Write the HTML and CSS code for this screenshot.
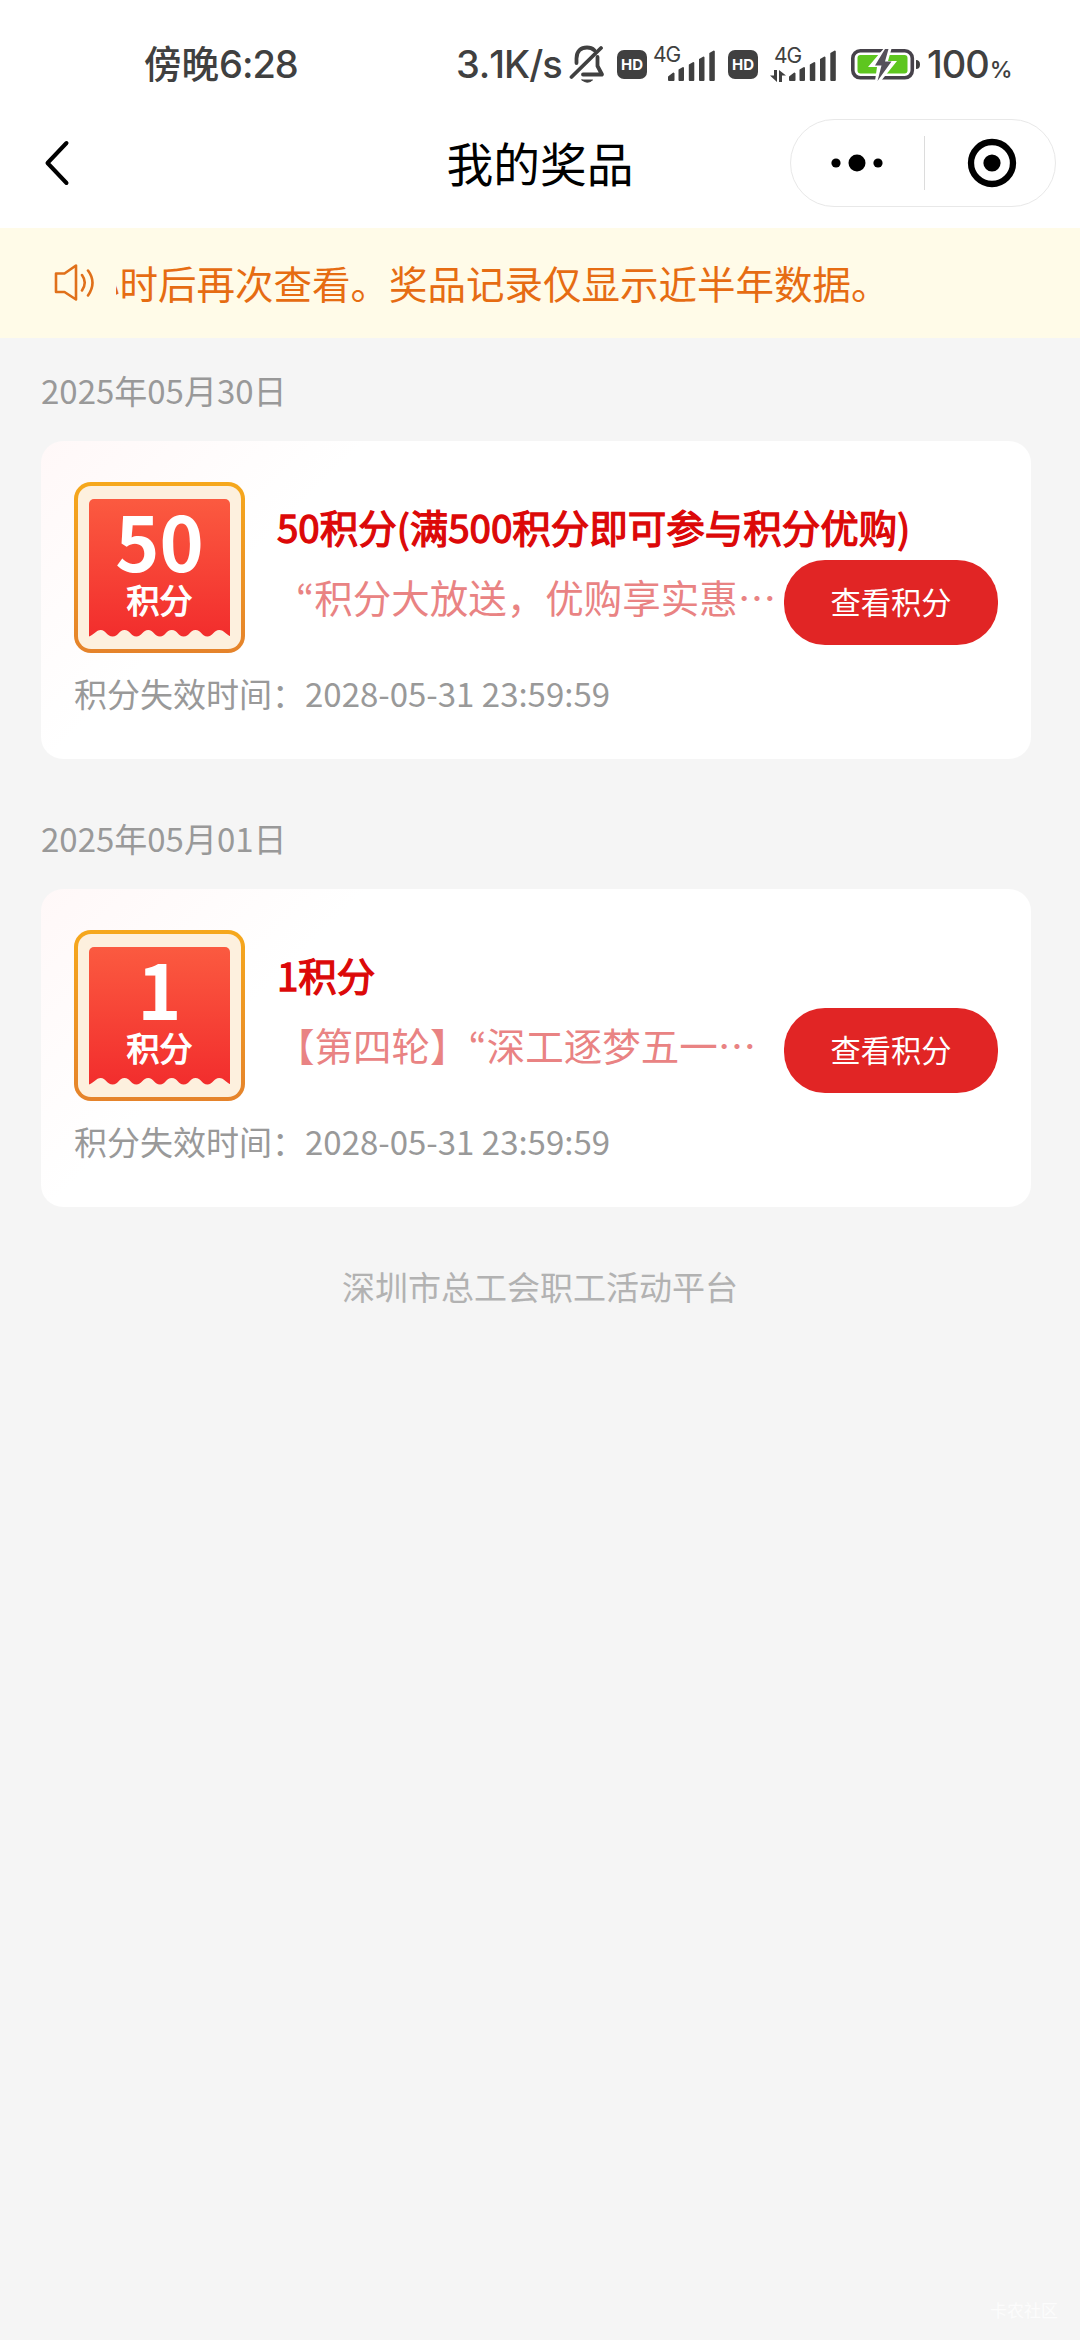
FILE: index.html
```html
<!DOCTYPE html>
<html lang="zh-CN">
<head>
<meta charset="utf-8">
<title>我的奖品</title>
<link rel="stylesheet" href="styles.css">
</head>
<body>
<div class="page">
  <header class="status">
    <span class="clock">傍晚<span class="num">6:28</span></span>
    <span class="speed num">3.1K/s</span>
    <svg class="bell" width="36" height="40" viewBox="0 0 36 40" fill="none" stroke="#404040" stroke-width="3.800" stroke-linecap="round" stroke-linejoin="round">
      <path d="M7.500 19v-4.500C7.500 7 12 3.500 18 3.500c3 0 5.500 1 7.500 2.800M28.500 13v9l4.500 8.500H14"/>
      <path d="M2.500 33 32 4"/>
      <path d="M13 36h10.500q-5 4.500-10.500 0z" fill="#404040" stroke-width="1"/>
    </svg>
    <span class="hd">HD</span>
    <span class="net net-first">4G</span>
    <svg class="bars" width="48" height="31" viewBox="0 0 48 31" fill="#404040" stroke="#404040" stroke-linejoin="round"><path d="M1 27l4.500-3.500V30H1zM11.500 20l3.500-2v12h-3.500zM21.800 15l3.500-2v17h-3.500zM32 9.500l3.500-2V30H32zM42.300 3.500l3.500-2V30h-3.500z" stroke-width="2"/></svg>
    <span class="hd">HD</span>
    <span class="net-stack">
      <span class="net">4G</span>
      <svg width="16" height="12" viewBox="0 0 16 12" fill="#404040"><path d="M4 0h3v12L0 5.500h4zM9 12h3V5.500h4L9 0z"/></svg>
    </span>
    <svg class="bars bars-second" width="48" height="31" viewBox="0 0 48 31" fill="#404040" stroke="#404040" stroke-linejoin="round"><path d="M1 27l4.500-3.500V30H1zM11.500 20l3.500-2v12h-3.500zM21.800 15l3.500-2v17h-3.500zM32 9.500l3.500-2V30H32zM42.300 3.500l3.500-2V30h-3.500z" stroke-width="2"/></svg>
    <svg class="battery" width="70" height="34" viewBox="0 0 70 34">
      <rect x="1.800" y="3.800" width="59.500" height="27" rx="7.500" fill="#fff" stroke="#46424a" stroke-width="3.600"/>
      <rect x="6.500" y="8" width="50" height="18.500" rx="3" fill="#5ec61f"/>
      <path d="M34 0 17 20h9L24 34h6L46 14h-9L41 0z" fill="#fff"/>
      <path d="M34 2 24 18.500h6.500L26.500 34 40.500 14.500h-6.500L37.500 2z" fill="#55505a"/>
      <path d="M65 13q4 0 4 4.500t-4 4.500z" fill="#404040"/>
    </svg>
    <span class="percent num">100<small>%</small></span>
  </header>

  <nav class="nav">
    <svg class="back" width="28" height="48" viewBox="0 0 28 48" fill="none" stroke="#000" stroke-width="4" stroke-linecap="round" stroke-linejoin="round"><path d="M23.500 4 4.500 24 23.500 44"/></svg>
    <h1>我的奖品</h1>
    <div class="capsule">
      <svg width="52" height="18" viewBox="0 0 52 18"><circle cx="5" cy="9" r="4.600"/><circle cx="26" cy="9" r="8.500"/><circle cx="47" cy="9" r="4.600"/></svg>
      <i class="divider"></i>
      <svg width="50" height="50" viewBox="0 0 50 50"><circle cx="25" cy="25" r="21" fill="none" stroke="#000" stroke-width="6.300"/><circle cx="25" cy="25" r="8.600"/></svg>
    </div>
  </nav>

  <section class="notice">
    <svg width="42" height="40" viewBox="0 0 42 40" fill="none" stroke="#e0701a" stroke-width="2.600" stroke-linejoin="round" stroke-linecap="round">
      <path d="M3 10.500h8.500L23 2.500v34L11.500 29H3z"/>
      <path d="M29 12q5.500 7.500 0 15.500M35 7.500q9 12 0 25"/>
    </svg>
    <div class="marquee"><span>小时后再次查看。奖品记录仅显示近半年数据。</span></div>
  </section>

  <main>
    <h2>2025年05月30日</h2>
    <article class="card">
      <div class="top">
        <div class="badge"><div class="ticket">
          <b>50</b><span>积分</span>
          <svg class="teeth" width="142" height="8" viewBox="0 0 142 8"><path d="M0 8V6.500C5 5 7 0 11.800 0S18 6.500 23.700 6.500 30 0 35.500 0 42 6.500 47.300 6.500 54 0 59.200 0 65.500 6.500 71 6.500 77 0 82.800 0 89 6.500 94.700 6.500 101 0 106.500 0 113 6.500 118.300 6.500 125 0 130.200 0 137 5 142 6.500V8z"/></svg>
        </div></div>
        <div class="info">
          <h3>50积分(满500积分即可参与积分优购)</h3>
          <div class="line">
            <p class="lead"><q lang="en">“</q>积分大放送，优购享实惠…</p>
            <button>查看积分</button>
          </div>
        </div>
      </div>
      <p class="expiry">积分失效时间：2028-05-31 23:59:59</p>
    </article>

    <h2>2025年05月01日</h2>
    <article class="card">
      <div class="top">
        <div class="badge"><div class="ticket">
          <b>1</b><span>积分</span>
          <svg class="teeth" width="142" height="8" viewBox="0 0 142 8"><path d="M0 8V6.500C5 5 7 0 11.800 0S18 6.500 23.700 6.500 30 0 35.500 0 42 6.500 47.300 6.500 54 0 59.200 0 65.500 6.500 71 6.500 77 0 82.800 0 89 6.500 94.700 6.500 101 0 106.500 0 113 6.500 118.300 6.500 125 0 130.200 0 137 5 142 6.500V8z"/></svg>
        </div></div>
        <div class="info">
          <h3>1积分</h3>
          <div class="line">
            <p>【第四轮】<q lang="en">“</q>深工逐梦五一…</p>
            <button>查看积分</button>
          </div>
        </div>
      </div>
      <p class="expiry">积分失效时间：2028-05-31 23:59:59</p>
    </article>
  </main>
  <footer>深圳市总工会职工活动平台</footer>
  <span class="watermark">卡农社区</span>
</div>
</body>
</html>
```
FILE: styles.css
```css
* { box-sizing: border-box; margin: 0; padding: 0; }
body {
  background: #f5f5f5;
  font-family: "Noto Sans CJK SC", sans-serif;
  font-kerning: none;
  text-spacing-trim: space-all;
}
svg { display: block; flex: none; }
.page { position: relative; width: 1080px; height: 2340px; overflow: hidden; }

.status {
  display: flex;
  align-items: center;
  height: 119px;
  padding: 9px 0 0 144px;
  background: #fff;
  color: #404040;
  font-size: 37.500px;
  font-weight: 500;
  white-space: nowrap;
}
.num { font-family: Inter, sans-serif; font-size: 38px; }
.clock { width: 312px; padding-bottom: 5px; }
.clock .num { letter-spacing: -1px; }
.speed { width: 112px; letter-spacing: -1px; }
.bell { margin-left: 1px; }
.hd {
  display: grid;
  place-items: center;
  width: 30px;
  height: 29px;
  margin-left: 12px;
  border-radius: 7px;
  background: #404040;
  color: #fff;
  font: 700 15px/1 Inter, sans-serif;
}
.net { font: 400 21px/22px Inter, sans-serif; letter-spacing: -1px; width: 27px; }
.net-first { margin: -18px 0 0 6px; }
.bars { margin: 3px 0 0 -12px; }
.bars-second { margin-left: -20px; }
.net-stack { display: flex; flex-direction: column; gap: 3px; height: 37px; margin-left: 12px; margin-top: -1px; width: 39px; }
.net-stack .net { margin-left: 4px; }
.battery { margin-left: 14px; }
.percent { margin-left: 6px; letter-spacing: -1px; }
.percent small { font-size: 23px; margin-left: 1px; }

.nav {
  display: grid;
  grid-template-columns: 396px 1fr 396px;
  align-items: center;
  height: 109px;
  padding-bottom: 21px;
  background: #fff;
}
.back { margin-left: 43px; }
.nav h1 { margin-top: -3px; font-size: 46.750px; font-weight: 400; line-height: 70px; text-align: center; color: #000; }
.capsule {
  display: flex;
  align-items: center;
  justify-self: end;
  width: 266px;
  height: 88px;
  margin-right: 24px;
  padding-left: 40px;
  border: 1px solid #e8e8e8;
  border-radius: 44px;
}
.divider { width: 1px; height: 54px; margin: 0 42px 0 41px; background: #dcdcdc; }

.notice {
  display: flex;
  align-items: center;
  height: 110px;
  padding: 0 44px 0 53px;
  background: #fffbe8;
  color: #e66c12;
}
.marquee { flex: 1; margin: -2px 0 0 21px; overflow: hidden; font-size: 38.500px; line-height: 60px; white-space: nowrap; }
.marquee span { margin-left: -35px; }

main { padding: 0 49px 0 41px; }
h2 { height: 103px; padding-top: 28px; font-size: 33px; line-height: 48px; font-weight: 400; color: #999; }
.card {
  height: 318px;
  margin-bottom: 27px;
  padding: 41px 33px 0;
  border-radius: 22px;
  background: linear-gradient(135deg, #fff8f8 0, #fff 25%);
}
.top { display: flex; height: 171px; }
.badge {
  flex: none;
  width: 171px;
  height: 171px;
  padding: 13px 11px;
  border: 4px solid transparent;
  border-radius: 17px;
  background: linear-gradient(#fdf0de, #fdf0de) padding-box, linear-gradient(#f6a81c, #e5832b) border-box;
}
.ticket {
  display: flex;
  flex-direction: column;
  align-items: center;
  height: 138px;
  border-radius: 5px 5px 0 0;
  background: linear-gradient(#fb5a40, #f22d2d);
  color: #fff;
}
.ticket b { height: 78px; font-size: 75px; line-height: 82px; font-weight: 700; }
.ticket span { font-size: 33px; line-height: 44px; font-weight: 400; -webkit-text-stroke: 1.200px #fff; }
.teeth { margin-top: 9px; fill: #fdf0de; }
.info { flex: 1; min-width: 0; margin-left: 31px; padding-top: 16px; }
h3 {
  height: 60px;
  padding-left: 1px;
  font-size: 38.500px;
  line-height: 56px;
  font-weight: 400;
  color: #dc0808;
  -webkit-text-stroke: 1.300px #dc0808;
  white-space: nowrap;
}
.line { display: flex; justify-content: space-between; align-items: flex-start; }
.line p { font-size: 38.500px; line-height: 76px; color: #e98383; white-space: nowrap; }
.line .lead { padding-left: 20px; }
q { quotes: none; font-family: "Noto Sans CJK KR", sans-serif; }
q::before, q::after { content: none; }
button {
  width: 214px;
  height: 85px;
  margin-top: 2px;
  border: 0;
  border-radius: 41px;
  background: #e12525;
  color: #fff;
  font: 400 30.250px/83px "Noto Sans CJK SC", sans-serif;
  padding-bottom: 2px;
}
.expiry { margin-top: 16px; font-size: 33px; line-height: 48px; color: #999; }
footer { margin-top: 55px; font-size: 33px; line-height: 48px; text-align: center; color: #b2b2b2; }
.watermark { position: absolute; right: 22px; bottom: 18px; font-size: 17px; line-height: 24px; color: #fcfcfc; }
```
